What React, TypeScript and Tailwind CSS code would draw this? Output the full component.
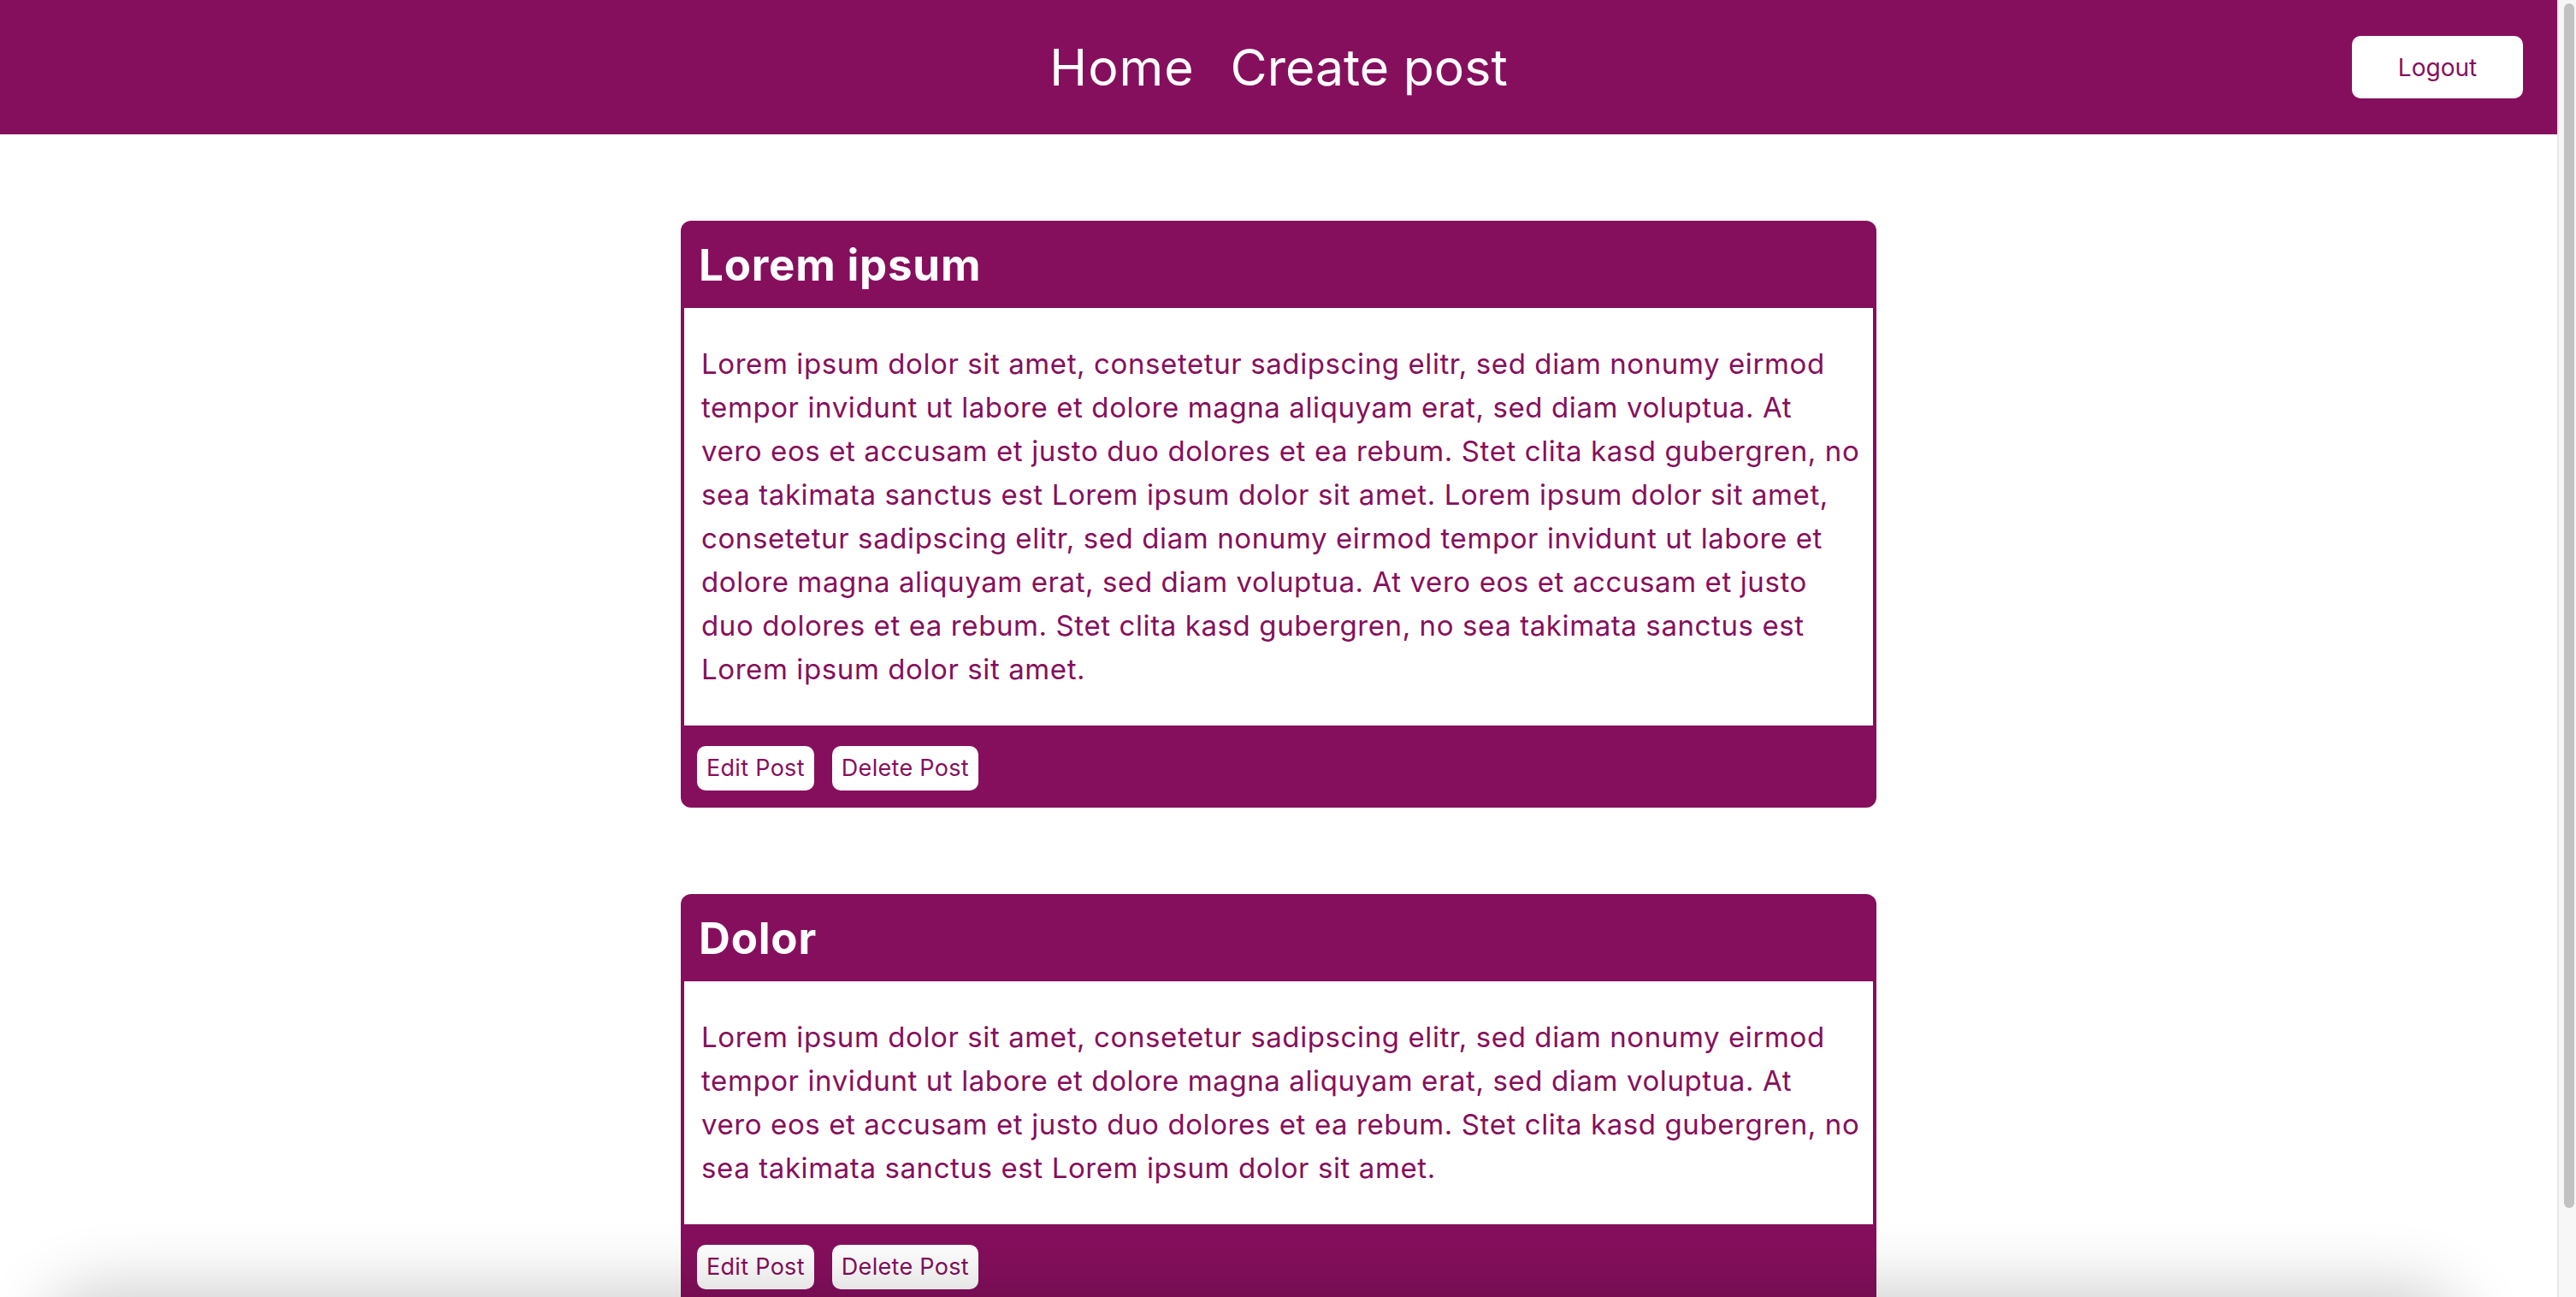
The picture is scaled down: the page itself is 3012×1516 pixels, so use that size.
import React from "react";

type Post = {
  title: string;
  lines: Array<string>;
};

const posts: Array<Post> = [
  {
    title: "Lorem ipsum",
    lines: [
      "Lorem ipsum dolor sit amet, consetetur sadipscing elitr, sed diam nonumy eirmod",
      "tempor invidunt ut labore et dolore magna aliquyam erat, sed diam voluptua. At",
      "vero eos et accusam et justo duo dolores et ea rebum. Stet clita kasd gubergren, no",
      "sea takimata sanctus est Lorem ipsum dolor sit amet. Lorem ipsum dolor sit amet,",
      "consetetur sadipscing elitr, sed diam nonumy eirmod tempor invidunt ut labore et",
      "dolore magna aliquyam erat, sed diam voluptua. At vero eos et accusam et justo",
      "duo dolores et ea rebum. Stet clita kasd gubergren, no sea takimata sanctus est",
      "Lorem ipsum dolor sit amet.",
    ],
  },
  {
    title: "Dolor",
    lines: [
      "Lorem ipsum dolor sit amet, consetetur sadipscing elitr, sed diam nonumy eirmod",
      "tempor invidunt ut labore et dolore magna aliquyam erat, sed diam voluptua. At",
      "vero eos et accusam et justo duo dolores et ea rebum. Stet clita kasd gubergren, no",
      "sea takimata sanctus est Lorem ipsum dolor sit amet.",
    ],
  },
];

function PostCard({ post }: { post: Post }) {
  return (
    <div className="w-[1398px] rounded-[12px] bg-[#860f5d] overflow-hidden">
      <div className="h-[102px] flex items-center px-[21px]">
        <h2 className="text-white text-[51px] font-bold leading-none tracking-[0.8px]">{post.title}</h2>
      </div>
      <div className="mx-[4px] bg-white px-[20px] py-[40px] text-[#860f5d] text-[33px] leading-[51px] tracking-[0.6px]">
        {post.lines.map((line, i) => (
          <span key={i} className="block whitespace-nowrap">
            {line}
          </span>
        ))}
      </div>
      <div className="flex gap-[21px] px-[19px] pt-[24px] pb-[20px]">
        <button className="h-[52px] px-[11px] rounded-[10px] bg-white text-[#860f5d] text-[27px] tracking-[0.3px]">Edit Post</button>
        <button className="h-[52px] px-[11px] rounded-[10px] bg-white text-[#860f5d] text-[27px] tracking-[0.3px]">Delete Post</button>
      </div>
    </div>
  );
}

export default function App() {
  return (
    <div className="h-screen w-full flex overflow-hidden bg-white font-['Inter','Noto_Sans',sans-serif]">
      <div className="flex-1 flex flex-col min-w-0">
        <header className="h-[157px] shrink-0 bg-[#860f5d] grid grid-cols-[1fr_auto_1fr] items-center">
          <div></div>
          <nav className="flex items-center gap-[42px] text-white text-[59px] leading-none">
            <a href="#" className="tracking-[1px]">Home</a>
            <a href="#">Create post</a>
          </nav>
          <div className="flex justify-end pr-[40px]">
            <button className="w-[200px] h-[73px] rounded-[10px] bg-white text-[#860f5d] text-[28px]">Logout</button>
          </div>
        </header>
        <main className="flex flex-col items-center gap-[101px] pt-[101px]">
          {posts.map((post, index) => (
            <PostCard key={index} post={post} />
          ))}
        </main>
      </div>
      {/* fake scrollbar */}
      <div className="w-[22px] shrink-0 bg-[#f7f7f7] border-l-[2px] border-[#e6e6e6] pt-[4px] pl-[6px]">
        <div className="w-[12px] h-[1408px] rounded-full bg-[#c1c1c1]"></div>
      </div>
      <div className="fixed top-full left-[60px] right-[140px] h-[120px] rounded-[60px] shadow-[0_0_80px_10px_rgba(0,0,0,0.2)]"></div>
    </div>
  );
}
